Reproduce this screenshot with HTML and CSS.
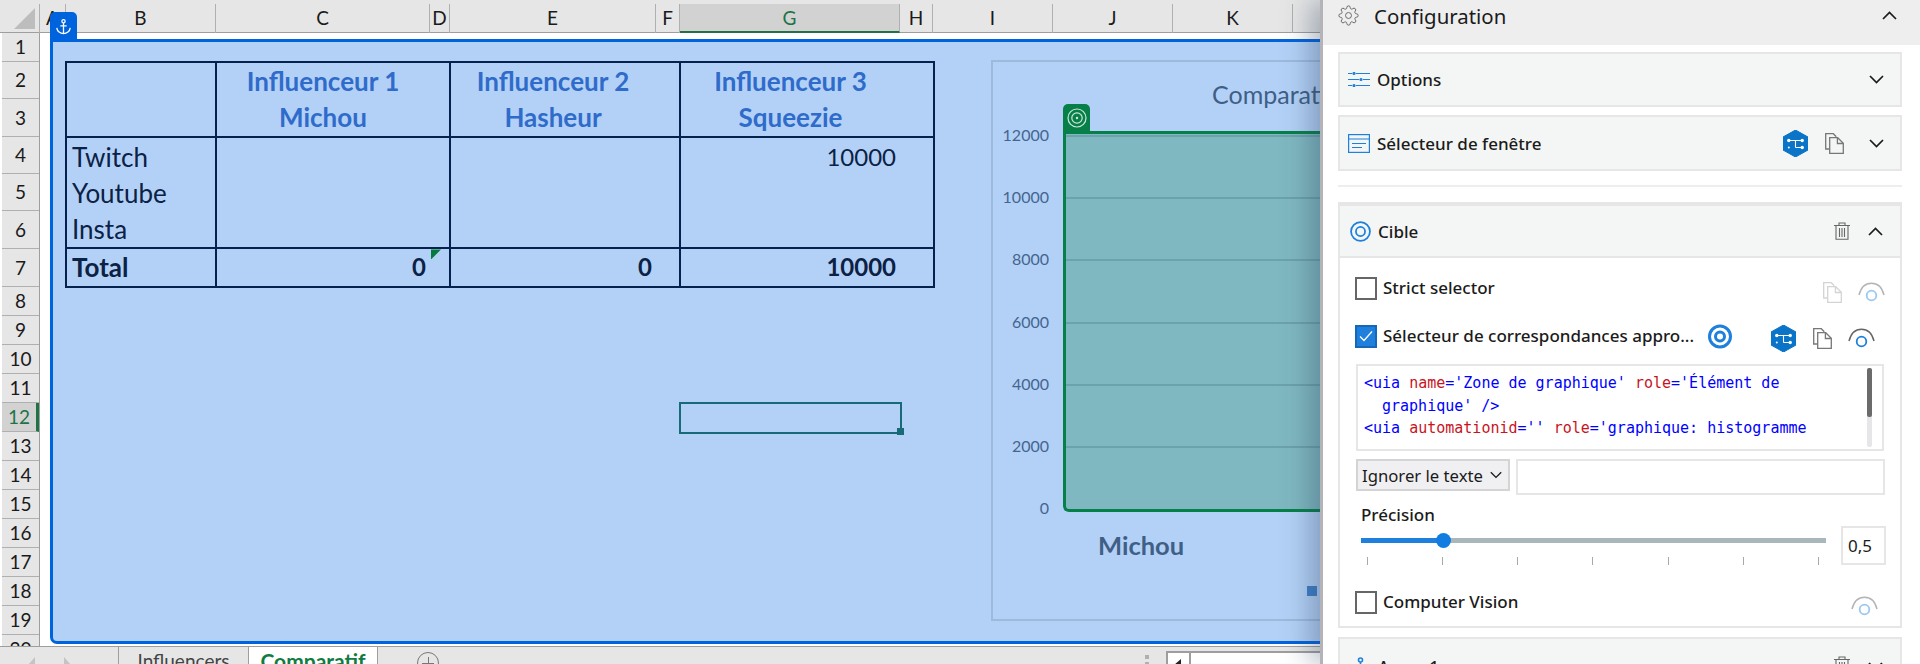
FILE: index.html
```html
<!DOCTYPE html>
<html lang="fr">
<head>
    <meta charset="UTF-8">
    <title>Comparatif</title>
    <link rel="stylesheet" href="styles.css">
</head>
<body>
    <svg class="sprite" xmlns="http://www.w3.org/2000/svg">
        <symbol id="i-gear" viewBox="0 0 24 24"><circle cx="12" cy="12" r="3.4" fill="none" stroke="currentColor" stroke-width="1.1"/><path fill="none" stroke="currentColor" stroke-width="1.1" d="M19.4 15a1.65 1.65 0 0 0 .33 1.82l.06.06a2 2 0 0 1 0 2.83 2 2 0 0 1-2.83 0l-.06-.06a1.65 1.65 0 0 0-1.82-.33 1.65 1.65 0 0 0-1 1.51V21a2 2 0 0 1-2 2 2 2 0 0 1-2-2v-.09A1.65 1.65 0 0 0 9 19.4a1.65 1.65 0 0 0-1.82.33l-.06.06a2 2 0 0 1-2.83 0 2 2 0 0 1 0-2.83l.06-.06a1.65 1.65 0 0 0 .33-1.82 1.65 1.65 0 0 0-1.51-1H3a2 2 0 0 1-2-2 2 2 0 0 1 2-2h.09A1.65 1.65 0 0 0 4.6 9a1.65 1.65 0 0 0-.33-1.82l-.06-.06a2 2 0 0 1 0-2.83 2 2 0 0 1 2.83 0l.06.06a1.65 1.65 0 0 0 1.82.33H9a1.65 1.65 0 0 0 1-1.51V3a2 2 0 0 1 2-2 2 2 0 0 1 2 2v.09a1.65 1.65 0 0 0 1 1.51 1.65 1.65 0 0 0 1.82-.33l.06-.06a2 2 0 0 1 2.83 0 2 2 0 0 1 0 2.83l-.06.06a1.65 1.65 0 0 0-.33 1.82V9a1.65 1.65 0 0 0 1.51 1H21a2 2 0 0 1 2 2 2 2 0 0 1-2 2h-.09a1.65 1.65 0 0 0-1.51 1z"/></symbol>
        <symbol id="i-up" viewBox="0 0 15 9"><path d="M1 8l6.5-6.5L14 8" fill="none" stroke="currentColor" stroke-width="1.7"/></symbol>
        <symbol id="i-down" viewBox="0 0 15 9"><path d="M1 1l6.5 6.5L14 1" fill="none" stroke="currentColor" stroke-width="1.7"/></symbol>
        <symbol id="i-options" viewBox="0 0 22 15"><g stroke="currentColor" stroke-width="1.2" fill="currentColor"><path d="M0 1.5h4M8 1.5h14M0 7.5h11M15 7.5h7M0 13.5h4M8 13.5h14"/><circle cx="6" cy="1.5" r="1"/><circle cx="13" cy="7.5" r="1"/><circle cx="6" cy="13.5" r="1"/></g></symbol>
        <symbol id="i-window" viewBox="0 0 22 19"><rect x=".6" y=".6" width="20.8" height="17.8" fill="none" stroke="currentColor" stroke-width="1.2"/><path d="M0 5h22M4 9.5h14M4 13.5h10" stroke="currentColor" stroke-width="1.2"/></symbol>
        <symbol id="i-hex" viewBox="0 0 25 27"><polygon points="12.5,0 25,7 25,20 12.5,27 0,20 0,7" fill="currentColor" stroke="currentColor" stroke-linejoin="round"/><path d="M6 10.500h13M12.500 10.500v7M12.500 17.500h6" stroke="#fff" stroke-width="1.100"/><g fill="#fff"><circle cx="5.800" cy="10.500" r="1.700"/><circle cx="19.200" cy="10.500" r="1.700"/><circle cx="19.200" cy="17.500" r="1.700"/><circle cx="5.800" cy="17.500" r="1"/></g></symbol>
        <symbol id="i-copy" viewBox="0 0 19 21"><path d="M4.5 16H.7V.7h7.6l3 3" fill="none" stroke="currentColor" stroke-width="1.3"/><path d="M4.7 4.7h8l5.6 5.6v10H4.7zM12.4 4.7v5.8h5.9" fill="none" stroke="currentColor" stroke-width="1.3"/></symbol>
        <symbol id="i-target" viewBox="0 0 24 24"><circle cx="12" cy="12" r="10.8" fill="none" stroke="currentColor" stroke-width="2"/><circle cx="12" cy="12" r="5.2" fill="none" stroke="currentColor" stroke-width="2"/></symbol>
        <symbol id="i-target-thick" viewBox="0 0 24 24"><circle cx="12" cy="12" r="10.5" fill="none" stroke="currentColor" stroke-width="3"/><circle cx="12" cy="12" r="4.5" fill="none" stroke="currentColor" stroke-width="3"/></symbol>
        <symbol id="i-bull" viewBox="0 0 20 20"><circle cx="10" cy="10" r="9" fill="none" stroke="currentColor" stroke-width="1.2"/><circle cx="10" cy="10" r="5.2" fill="none" stroke="currentColor" stroke-width="1.2"/><circle cx="10" cy="10" r="1.2" fill="currentColor"/></symbol>
        <symbol id="i-trash" viewBox="0 0 16 18"><path d="M0 3.5h16M5 3.5V1h6v2.5M2 3.5V17.3h12V3.5M5.5 6v9M8 6v9M10.5 6v9" fill="none" stroke="currentColor" stroke-width="1.1"/></symbol>
        <symbol id="i-eye" viewBox="0 0 27 20"><path d="M1 13C3 5 8 1.200 13.500 1.200S24 5 26 13" fill="none" stroke="currentColor" stroke-width="1.5"/><circle cx="13.500" cy="13.500" r="4.800" fill="none" stroke="var(--eye-dot)" stroke-width="1.800"/></symbol>
        <symbol id="i-anchor" viewBox="0 0 24 24"><g fill="none" stroke="currentColor" stroke-width="1.8"><circle cx="12" cy="4.500" r="2.300"/><path d="M12 7v15M7.500 11h9M2.500 14c.5 5 5 8 9.500 8s9-3 9.500-8"/></g></symbol>
        <symbol id="i-check" viewBox="0 0 14 12"><path d="M1 6.500l4 4L13 1.500" fill="none" stroke="currentColor" stroke-width="1.300"/></symbol>
    </svg>

    <div class="app">
        <main class="sheet">
            <div class="col-heads">
                <div class="corner"><span class="corner-mark"></span></div>
                <div class="col-head">A</div>
                <div class="col-head">B</div>
                <div class="col-head">C</div>
                <div class="col-head">D</div>
                <div class="col-head">E</div>
                <div class="col-head">F</div>
                <div class="col-head is-current">G</div>
                <div class="col-head">H</div>
                <div class="col-head">I</div>
                <div class="col-head">J</div>
                <div class="col-head">K</div>
                <div class="col-head">L</div>
            </div>

            <div class="sheet-body">
                <div class="row-heads">
                    <div class="row-head r1">1</div>
                    <div class="row-head r2">2</div>
                    <div class="row-head r3">3</div>
                    <div class="row-head r2">4</div>
                    <div class="row-head r2">5</div>
                    <div class="row-head r3">6</div>
                    <div class="row-head r3">7</div>
                    <div class="row-head">8</div>
                    <div class="row-head">9</div>
                    <div class="row-head">10</div>
                    <div class="row-head">11</div>
                    <div class="row-head is-current">12</div>
                    <div class="row-head">13</div>
                    <div class="row-head">14</div>
                    <div class="row-head">15</div>
                    <div class="row-head">16</div>
                    <div class="row-head">17</div>
                    <div class="row-head">18</div>
                    <div class="row-head">19</div>
                    <div class="row-head">20</div>
                </div>

                <section class="overlay">
                    <div class="anchor-tab"><svg class="icon-anchor"><use href="#i-anchor"/></svg></div>

                    <table class="grid">
                        <colgroup>
                            <col class="c-label">
                            <col class="c-one">
                            <col class="c-two">
                            <col class="c-three">
                        </colgroup>
                        <tr class="row-top">
                            <td></td>
                            <th class="pad-one">Influenceur 1<br>Michou</th>
                            <th class="pad-two">Influenceur 2<br>Hasheur</th>
                            <th class="pad-three">Influenceur 3<br>Squeezie</th>
                        </tr>
                        <tr class="row-data">
                            <td class="label">Twitch<br>Youtube<br>Insta</td>
                            <td></td>
                            <td></td>
                            <td class="num pad-three">10000</td>
                        </tr>
                        <tr class="row-total">
                            <td class="label">Total</td>
                            <td class="num pad-one"><span class="flag"></span>0</td>
                            <td class="num pad-two">0</td>
                            <td class="num pad-three">10000</td>
                        </tr>
                    </table>

                    <div class="cell-cursor"><span class="cell-handle"></span></div>

                    <div class="chart">
                        <div class="chart-title">Comparatif</div>
                        <div class="chart-body">
                            <div class="axis">
                                <span>12000</span>
                                <span>10000</span>
                                <span>8000</span>
                                <span>6000</span>
                                <span>4000</span>
                                <span>2000</span>
                                <span>0</span>
                            </div>
                            <div class="plot">
                                <div class="target-tab"><svg class="icon-bull"><use href="#i-bull"/></svg></div>
                                <div class="band"></div>
                                <div class="band"></div>
                                <div class="band"></div>
                                <div class="band"></div>
                                <div class="band"></div>
                                <div class="band"></div>
                            </div>
                        </div>
                        <div class="chart-cat">Michou</div>
                        <div class="legend-key"></div>
                    </div>
                </section>
            </div>

            <div class="tabs">
                <span class="nav nav-left"></span>
                <span class="nav nav-right"></span>
                <div class="tab">Influencers</div>
                <div class="tab is-active">Comparatif</div>
                <span class="add-sheet"></span>
                <span class="grip"></span>
                <span class="scroll-left"></span>
                <span class="scroll-track"></span>
            </div>
        </main>

        <aside class="panel">
            <header class="panel-head">
                <svg class="icon-gear"><use href="#i-gear"/></svg>
                <span class="panel-title">Configuration</span>
                <svg class="chev panel-chev"><use href="#i-up"/></svg>
            </header>

            <div class="section section-options">
                <svg class="icon-head options"><use href="#i-options"/></svg>
                <span class="section-name">Options</span>
                <svg class="chev"><use href="#i-down"/></svg>
            </div>

            <div class="section section-window">
                <svg class="icon-head window"><use href="#i-window"/></svg>
                <span class="section-name">Sélecteur de fenêtre</span>
                <svg class="icon-hex"><use href="#i-hex"/></svg>
                <svg class="icon-copy"><use href="#i-copy"/></svg>
                <svg class="chev"><use href="#i-down"/></svg>
            </div>

            <hr class="divider">

            <div class="card">
                <div class="section section-target">
                    <svg class="icon-target"><use href="#i-target"/></svg>
                    <span class="section-name">Cible</span>
                    <svg class="icon-trash"><use href="#i-trash"/></svg>
                    <svg class="chev"><use href="#i-up"/></svg>
                </div>

                <div class="card-body">
                    <div class="option option-strict">
                        <span class="box"></span>
                        <span class="option-name">Strict selector</span>
                        <svg class="icon-copy is-off"><use href="#i-copy"/></svg>
                        <svg class="icon-eye is-off"><use href="#i-eye"/></svg>
                    </div>

                    <div class="option option-fuzzy">
                        <span class="box is-checked"><svg class="icon-check"><use href="#i-check"/></svg></span>
                        <span class="option-name">Sélecteur de correspondances appro...</span>
                        <svg class="icon-pick"><use href="#i-target-thick"/></svg>
                        <svg class="icon-hex"><use href="#i-hex"/></svg>
                        <svg class="icon-copy"><use href="#i-copy"/></svg>
                        <svg class="icon-eye"><use href="#i-eye"/></svg>
                    </div>

                    <div class="code">
                        <div class="code-line"><b>&lt;uia </b><i>name</i><b>='Zone de graphique' </b><i>role</i><b>='Élément de</b></div>
                        <div class="code-line indent"><b>graphique' /&gt;</b></div>
                        <div class="code-line"><b>&lt;uia </b><i>automationid</i><b>='' </b><i>role</i><b>='graphique: histogramme</b></div>
                        <span class="code-thumb"></span>
                    </div>

                    <div class="text-row">
                        <div class="dropdown">Ignorer le texte<svg class="chev-small"><use href="#i-down"/></svg></div>
                        <div class="text-input"></div>
                    </div>

                    <div class="slider-label">Précision</div>
                    <div class="slider-row">
                        <div class="slider">
                            <div class="track"><div class="fill"></div><span class="thumb"></span></div>
                            <div class="ticks">
                                <span></span><span></span><span></span><span></span><span></span><span></span><span></span>
                            </div>
                        </div>
                        <div class="slider-value">0,5</div>
                    </div>

                    <div class="option option-vision">
                        <span class="box"></span>
                        <span class="option-name">Computer Vision</span>
                        <svg class="icon-eye is-off"><use href="#i-eye"/></svg>
                    </div>
                </div>
            </div>

            <div class="section section-anchor">
                <svg class="icon-anchor-blue"><use href="#i-anchor"/></svg>
                <span class="section-name">Ancre 1</span>
                <svg class="icon-trash"><use href="#i-trash"/></svg>
                <svg class="chev"><use href="#i-down"/></svg>
            </div>
        </aside>
    </div>
</body>
</html>
```

FILE: styles.css
```css
* {
    box-sizing: border-box;
}

html, body {
    margin: 0;
    padding: 0;
    height: 664px;
    overflow: hidden;
    background-color: #fff;
}

.sprite {
    display: none;
}

.app {
    display: flex;
    width: 1920px;
    height: 664px;
}

/* spreadsheet */
.sheet {
    position: relative;
    display: flex;
    flex-direction: column;
    width: 1320px;
    height: 664px;
    overflow: hidden;
    font-family: Lato, "Liberation Sans", sans-serif;
}

.col-heads {
    display: grid;
    grid-template-columns: 40px 26px 150px 214px 20px 206px 24px 220px 33px 120px 120px 120px 120px;
    flex: none;
    height: 33px;
    padding-top: 4px;
    background-color: #e6e6e6;
    border-bottom: 1px solid #9e9e9e;
}

.corner {
    display: flex;
    justify-content: flex-end;
    padding: 4px 4px 0 0;
    border-right: 1px solid #b0b0b0;
}

.corner-mark {
    width: 21px;
    height: 21px;
    background-color: #bdbdbd;
    clip-path: polygon(100% 0, 100% 100%, 0 100%);
}

.col-head {
    padding-top: 1px;
    border-right: 1px solid #b0b0b0;
    color: #1a1a1a;
    font-size: 19px;
    line-height: 26px;
    text-align: center;
}

.col-head.is-current {
    background-color: #d2d2d2;
    border-bottom: 2px solid #217346;
    color: #217346;
}

.sheet-body {
    position: relative;
    flex: none;
    height: 613px;
}

.row-heads {
    display: flex;
    flex-direction: column;
    width: 38px;
    height: 613px;
    margin-left: 2px;
    overflow: hidden;
    background-color: #e6e6e6;
    border-right: 1px solid #9e9e9e;
}

.row-head {
    flex: none;
    height: 29px;
    border-bottom: 1px solid #b0b0b0;
    color: #1a1a1a;
    font-size: 19px;
    line-height: 28px;
    text-align: center;
}

.row-head.r2 {
    height: 37px;
    line-height: 36px;
}

.row-head.r3 {
    height: 38px;
    line-height: 37px;
}

.row-head.is-current {
    background-color: #d2d2d2;
    border-right: 3px solid #217346;
    color: #217346;
}

.overlay {
    position: absolute;
    left: 50px;
    top: 6px;
    width: 1290px;
    height: 605px;
    padding: 19px 0 0 12px;
    background-color: #b3d1f6;
    border: 3px solid #0063de;
    border-radius: 0 0 0 7px;
}

.anchor-tab {
    position: absolute;
    left: -3px;
    top: -30px;
    display: flex;
    align-items: center;
    justify-content: center;
    width: 27px;
    height: 28px;
    background-color: #0063de;
    border-radius: 5px 5px 0 0;
}

.icon-anchor {
    width: 17px;
    height: 17px;
    color: #fff;
}

.grid {
    width: 868px;
    table-layout: fixed;
    border-collapse: collapse;
    border: 2px solid #05214e;
    color: #0b2145;
    font-size: 26px;
    line-height: 36.300px;
}

.grid td, .grid th {
    position: relative;
    padding: 0;
    border: 2px solid #05214e;
    vertical-align: top;
}

.c-label {
    width: 150px;
}

.c-one {
    width: 234px;
}

.c-two {
    width: 230px;
}

.c-three {
    width: 254px;
}

.row-data td {
    padding-top: 1px;
}

.row-total {
    font-weight: 700;
}

.grid th {
    color: #2f6bca;
    font-weight: 700;
    text-align: center;
}

.grid .label {
    padding-left: 5px;
}

.grid .num {
    font-size: 24px;
    text-align: right;
}

th.pad-one {
    padding-right: 20px;
}

th.pad-two {
    padding-right: 24px;
}

th.pad-three {
    padding-right: 33px;
}

td.pad-one {
    padding-right: 23px;
}

td.pad-two {
    padding-right: 27px;
}

td.pad-three {
    padding-right: 37px;
}

.flag {
    position: absolute;
    left: 214px;
    top: 0;
    width: 10px;
    height: 10px;
    background-color: #057a3e;
    clip-path: polygon(0 0, 100% 0, 0 100%);
}

.cell-cursor {
    position: absolute;
    left: 626px;
    top: 360px;
    width: 223px;
    height: 32px;
    border: 2px solid #176b78;
}

.cell-handle {
    position: absolute;
    right: -4px;
    bottom: -3px;
    width: 7px;
    height: 7px;
    background-color: #176b78;
}

.chart {
    position: absolute;
    left: 938px;
    top: 18px;
    display: flex;
    flex-direction: column;
    width: 500px;
    height: 561px;
    border: 2px solid #9db9dc;
    color: #44658f;
}

.chart-title {
    flex: none;
    margin: 15px 0 0 219px;
    color: #3f5f86;
    font-size: 25px;
    line-height: 34px;
}

.chart-body {
    display: flex;
    flex: none;
    height: 381px;
    margin-top: 20px;
}

.axis {
    display: flex;
    flex-direction: column;
    width: 56px;
    height: 381px;
    margin-right: 14px;
    padding-top: 4px;
    font-size: 16px;
    text-align: right;
}

.axis span {
    flex: none;
    height: 62.2px;
    line-height: 0;
}

.plot {
    position: relative;
    display: flex;
    flex-direction: column;
    width: 420px;
    height: 381px;
    padding-top: 1px;
    background-color: #7fb8c0;
    border: 3px solid #068048;
    border-right: 0;
    border-radius: 0 0 0 6px;
}

.target-tab {
    position: absolute;
    left: -3px;
    top: -30px;
    display: flex;
    align-items: center;
    justify-content: center;
    width: 27px;
    height: 27px;
    background-color: #068048;
    border-radius: 5px 5px 0 0;
}

.icon-bull {
    width: 20px;
    height: 20px;
    color: #cfe6dc;
}

.band {
    flex: none;
    height: 62.2px;
    border-top: 2px solid #6ca2aa;
}

.chart-cat {
    flex: none;
    margin: 16px 0 0 105px;
    color: #3f5f86;
    font-size: 25.500px;
    font-weight: 700;
    line-height: 34px;
}

.legend-key {
    flex: none;
    width: 10px;
    height: 10px;
    margin: 24px 0 0 314px;
    background-color: #3f80c8;
}

/* sheet tabs */
.tabs {
    position: relative;
    display: flex;
    flex: none;
    height: 18px;
    padding-left: 118px;
    background-color: #e6e6e6;
    border-top: 1px solid #9e9e9e;
    overflow: hidden;
    font-size: 19px;
}

.nav {
    position: absolute;
    top: 10px;
    border-top: 8px solid transparent;
    border-bottom: 8px solid transparent;
}

.nav-left {
    left: 28px;
    border-right: 7px solid #c4c4c4;
}

.nav-right {
    left: 64px;
    border-left: 7px solid #c4c4c4;
}

.tab {
    flex: none;
    width: 130px;
    height: 30px;
    border-left: 1px solid #9e9e9e;
    color: #444;
    line-height: 27px;
    text-align: center;
}

.tab.is-active {
    background-color: #fff;
    border-right: 1px solid #9e9e9e;
    color: #107c41;
    font-size: 21px;
    font-weight: 700;
}

.add-sheet {
    flex: none;
    width: 22px;
    height: 22px;
    margin: 5px 0 0 39px;
    border: 1px solid #777;
    border-radius: 50%;
    background: linear-gradient(#777, #777) center / 12px 1px no-repeat, linear-gradient(#777, #777) center / 1px 12px no-repeat;
}

.grip {
    flex: none;
    width: 4px;
    height: 4px;
    margin: 8px 0 0 706px;
    background-color: #b0b0b0;
    box-shadow: 0 7px 0 #b0b0b0;
}

.scroll-left {
    position: relative;
    flex: none;
    width: 25px;
    height: 24px;
    margin: 4px 0 0 17px;
    background-color: #fff;
    border: 2px solid #9e9e9e;
    border-bottom: 0;
}

.scroll-left::after {
    content: "";
    position: absolute;
    left: 6px;
    top: 6px;
    border-top: 6px solid transparent;
    border-bottom: 6px solid transparent;
    border-right: 7px solid #222;
}

.scroll-track {
    flex: none;
    width: 130px;
    height: 24px;
    margin-top: 4px;
    background-color: #fff;
    border-top: 2px solid #9e9e9e;
}

/* side panel */
.panel {
    position: relative;
    flex: none;
    width: 600px;
    height: 664px;
    padding: 0 18px 0 15px;
    overflow: hidden;
    background-color: #fff;
    border-left: 3px solid #b4b4b8;
    box-shadow: -10px 0 26px rgba(40, 60, 90, 0.35);
    color: #1b1b1b;
    font-family: "Noto Sans", "Open Sans", sans-serif;
}

.panel-head {
    display: flex;
    align-items: center;
    height: 45px;
    margin: 0 -18px 0 -15px;
    padding: 0 23px 14px 15px;
    background-color: #eee;
}

.icon-gear {
    width: 21px;
    height: 21px;
    color: #666;
}

.panel-title {
    flex: 1;
    margin-left: 15px;
    font-size: 20.400px;
}

.chev {
    flex: none;
    width: 15px;
    height: 9px;
    color: #1b1b1b;
}

.section {
    display: flex;
    align-items: center;
    padding: 0 16px 0 8px;
    background-color: #f4f6f5;
    border: 2px solid #e6e6e6;
}

.section-name {
    flex: 1;
    margin-left: 7px;
    font-size: 17px;
    font-weight: 500;
}

.section-options {
    height: 55px;
    margin-top: 7px;
}

.section-window {
    height: 56px;
    margin-top: 8px;
}

.icon-head {
    flex: none;
    width: 22px;
    color: #1e7fdc;
}

.icon-head.options {
    height: 15px;
}

.icon-head.window {
    height: 19px;
}

.icon-hex {
    flex: none;
    width: 25px;
    height: 27px;
    color: #0a74c8;
}

.icon-copy {
    flex: none;
    width: 19px;
    height: 21px;
    margin-left: 17px;
    color: #777;
}

.icon-copy.is-off {
    color: #d4d4d4;
}

.section-window .chev {
    margin-left: 25px;
}

.divider {
    height: 2px;
    margin: 14px 0 0;
    border: 0;
    background-color: #eee;
}

.card {
    height: 426px;
    margin-top: 15px;
    border: 2px solid #e6e6e6;
}

.section-target {
    height: 54px;
    margin: 0;
    padding: 0 17px 0 10px;
    border-width: 2px 0;
}

.icon-target {
    flex: none;
    width: 21px;
    height: 21px;
    color: #1e7fdc;
}

.icon-trash {
    flex: none;
    width: 16px;
    height: 18px;
    color: #666;
}

.section-target .chev {
    margin-left: 18px;
}

.card-body {
    padding: 18px 15px 0;
}

.option {
    display: flex;
    align-items: center;
    height: 24px;
    font-size: 17px;
    font-weight: 500;
}

.option-name {
    flex: none;
    margin: -2px 0 0 6px;
}

.box {
    display: flex;
    flex: none;
    align-items: center;
    justify-content: center;
    width: 22px;
    height: 23px;
    background-color: #fff;
    border: 2px solid #666;
}

.box.is-checked {
    background-color: #1e7fdc;
    border-color: #1568b8;
}

.icon-check {
    width: 14px;
    height: 12px;
    color: #fff;
}

.icon-eye {
    --eye-dot: #1e7fdc;
    flex: none;
    width: 27px;
    height: 20px;
    margin-left: 16px;
    color: #666;
}

.icon-eye.is-off {
    --eye-dot: #9cc8f0;
    color: #b4b4b4;
}

.option-strict .icon-copy {
    margin-left: auto;
}

.option-strict svg {
    margin-top: 8px;
}

.option-fuzzy {
    margin-top: 24px;
}

.option-fuzzy .icon-pick {
    flex: none;
    width: 24px;
    height: 25px;
    margin-left: 14px;
    color: #1e7fdc;
}

.option-fuzzy .icon-hex {
    margin-left: 39px;
    margin-top: 4px;
}

.option-fuzzy .icon-copy, .option-fuzzy .icon-eye {
    margin-top: 4px;
}

.option-vision {
    margin-top: 25px;
}

.option-vision .icon-eye {
    margin-left: auto;
    margin-right: 7px;
    margin-top: 8px;
}

.code {
    position: relative;
    width: 528px;
    height: 87px;
    margin-top: 16px;
    margin-left: 1px;
    padding: 6px 0 0 6px;
    border: 2px solid #e6e6e6;
    overflow: hidden;
    font-family: "DejaVu Sans Mono", monospace;
    font-size: 15px;
    line-height: 22.500px;
}

.code-line {
    white-space: pre;
}

.code b {
    color: #0000ff;
    font-weight: 400;
}

.code i {
    color: #c8141e;
    font-style: normal;
}

.code-line.indent {
    padding-left: 18px;
}

.code-thumb {
    position: absolute;
    right: 10px;
    top: 2px;
    width: 5px;
    height: 49px;
    background-color: #6b6b6b;
    border-radius: 2px;
    box-shadow: 0 30px 0 #e6e6e8;
}

.text-row {
    display: flex;
    gap: 6px;
    margin: 8px 0 0 1px;
}

.dropdown {
    display: flex;
    align-items: center;
    justify-content: space-between;
    width: 154px;
    height: 32px;
    padding: 0 6px 0 4px;
    background-color: #f0f0f2;
    border: 2px solid #d4d4d4;
    font-size: 16.700px;
}

.chev-small {
    flex: none;
    width: 12px;
    height: 8px;
}

.text-input {
    width: 370px;
    height: 36px;
    border: 2px solid #e6e6e6;
}

.slider-label {
    height: 23px;
    margin: 8px 0 0 6px;
    font-size: 17px;
    font-weight: 500;
    line-height: 23px;
}

.slider-row {
    display: flex;
    align-items: flex-start;
    justify-content: space-between;
    width: 525px;
    margin-left: 6px;
}

.slider {
    width: 465px;
    padding-top: 12px;
}

.track {
    position: relative;
    height: 5px;
    background-color: #a9b6bb;
}

.fill {
    width: 82px;
    height: 5px;
    background-color: #1e7fdc;
}

.thumb {
    position: absolute;
    left: 75px;
    top: -5px;
    width: 15px;
    height: 15px;
    background-color: #127de0;
    border-radius: 50%;
}

.ticks {
    display: flex;
    justify-content: space-between;
    margin-top: 14px;
    padding: 0 7px 0 6px;
}

.ticks span {
    width: 1px;
    height: 8px;
    background-color: #a8a8a8;
}

.slider-value {
    width: 45px;
    height: 39px;
    padding-left: 5px;
    border: 2px solid #e6e6e6;
    font-size: 17px;
    line-height: 35px;
}

.section-anchor {
    align-items: flex-start;
    height: 60px;
    margin-top: 9px;
    padding: 17px 17px 0 10px;
}

.section-anchor .section-name {
    margin-top: -1px;
}

.icon-anchor-blue {
    flex: none;
    width: 21px;
    height: 21px;
    color: #1e7fdc;
}

.section-anchor .chev {
    margin-top: 6px;
    margin-left: 18px;
}
```
